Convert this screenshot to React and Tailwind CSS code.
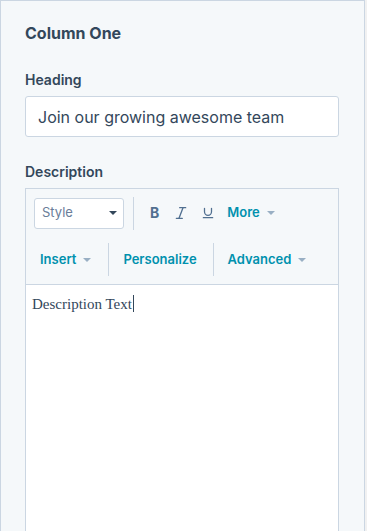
import React from 'react';
import { Italic, Underline } from 'lucide-react';

function Caret({ className }) {
    return (
        <svg width="8" height="4" viewBox="0 0 8 4" className={className} aria-hidden="true">
            <path d="M0 0h8L4 4z" fill="currentColor" />
        </svg>
    );
}

function ToolButton({ label, caret = true, className = '' }) {
    return (
        <button type="button" className={`flex items-center gap-[7px] text-[13px] font-semibold text-[#0091ae] ${className}`}>
            {label}
            {caret && <Caret className="text-[#99afc4]" />}
        </button>
    );
}

export default function App() {
    return (
        <div className="flex min-h-[531px] w-[367px] font-['Inter',sans-serif] text-[#33475b]">
            <div className="w-[365px] border-l border-t border-r border-[#cbd6e2] bg-[#f5f8fa] pl-6 pr-[25px] pt-5">
                <h2 className="text-[16px] font-bold leading-6">Column One</h2>

                <label className="mt-[25px] block text-[14px] font-semibold leading-5">Heading</label>
                <div className="mt-1.5 flex h-[41px] items-center rounded-[3px] border border-[#cbd6e2] bg-white px-3 text-[16px]">
                    Join our growing awesome team
                </div>

                <label className="mt-[25px] block text-[14px] font-semibold leading-5">Description</label>
                <div className="mt-1.5 h-[400px] border border-[#cbd6e2] bg-white">
                    {/* toolbar */}
                    <div className="border-b border-[#cbd6e2] bg-[#f5f8fa] px-2 pt-2 pb-2">
                        <div className="flex h-[32px] items-center">
                            <div className="flex h-[31px] w-[90px] items-center justify-between rounded-[3px] border border-[#cbd6e2] bg-white pl-[7px] pr-[6px] text-[13px] text-[#6a7d99]">
                                Style
                                <Caret className="text-[#33475b]" />
                            </div>
                            <div className="ml-[9px] h-[33px] w-px bg-[#cbd6e2]" />
                            <span className="ml-[16px] text-[14px] font-bold leading-none text-[#516f90]">B</span>
                            <Italic size={16} strokeWidth={2} className="ml-[14px] text-[#516f90]" />
                            <Underline size={14} strokeWidth={2.2} className="ml-[12px] text-[#516f90]" />
                            <ToolButton label="More" className="ml-[12px]" />
                        </div>
                        <div className="mt-[14px] flex h-[33px] items-center">
                            <ToolButton label="Insert" className="ml-[6px]" />
                            <div className="ml-[17px] h-[33px] w-px bg-[#cbd6e2]" />
                            <ToolButton label="Personalize" caret={false} className="ml-[14px]" />
                            <div className="ml-[16px] h-[33px] w-px bg-[#cbd6e2]" />
                            <ToolButton label="Advanced" className="ml-[14px]" />
                        </div>
                    </div>
                    {/* content */}
                    <div className="px-[6px] pt-[7px] font-['Liberation_Serif',serif] text-[15px] text-[#33475b]">
                        Description Text<span className="ml-px inline-block h-[17px] w-px translate-y-[3px] bg-[#33475b]" />
                    </div>
                </div>
            </div>
            <div className="w-[2px] bg-[#f1f1f1]" />
        </div>
    );
}
